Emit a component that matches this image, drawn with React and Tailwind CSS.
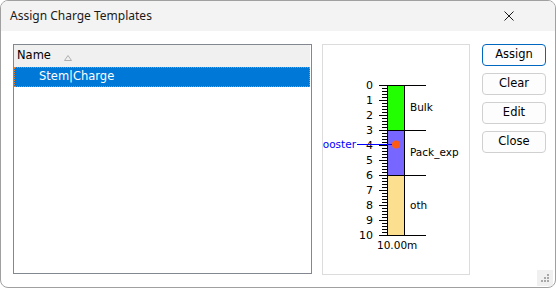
import React from "react";

function Chart() {
  const top = 40;
  const unit = 15;
  const ticks = [];
  for (let i = 0; i <= 50; i++) {
    const y = top + i * 3 + 0.5;
    const major = i % 5 === 0;
    ticks.push(
      <line key={i} x1={major ? 56 : 59} x2={64} y1={y} y2={y} stroke="#000" strokeWidth="1" />
    );
  }
  const labels = [];
  for (let i = 0; i <= 10; i++) {
    labels.push(
      <text key={i} x={50} y={top + i * unit + 4} textAnchor="end" fontSize="11" fill="#000">
        {i}
      </text>
    );
  }
  return (
    <svg width="146" height="229" viewBox="0 0 146 229" style={{ fontFamily: '"DejaVu Sans", sans-serif' }}>
      <rect x="64" y={top} width="18" height={3 * unit} fill="#22ff00" />
      <rect x="64" y={top + 3 * unit} width="18" height={3 * unit} fill="#7766ff" />
      <rect x="64" y={top + 6 * unit} width="18" height={4 * unit} fill="#fde08f" />
      <line x1="64.5" x2="64.5" y1={top} y2={top + 10 * unit} stroke="#000" />
      <line x1="81.5" x2="81.5" y1={top} y2={top + 10 * unit} stroke="#000" />
      {ticks}
      {[0, 3, 6, 10].map((u) => (
        <line key={u} x1="56" x2="103" y1={top + u * unit + 0.5} y2={top + u * unit + 0.5} stroke="#000" />
      ))}
      {labels}
      <text x="87" y="66" fontSize="10.5" fill="#000">Bulk</text>
      <text x="87" y="111" fontSize="10.5" fill="#000">Pack_exp</text>
      <text x="87" y="164" fontSize="10.5" fill="#000">oth</text>
      <text x="54" y="204" fontSize="10.5" fill="#000">10.00m</text>
      <line x1="34" x2="73" y1="99.5" y2="99.5" stroke="#0000ff" />
      <text x="33" y="103" textAnchor="end" fontSize="10.5" fill="#0000ff">booster</text>
      <circle cx="73" cy="99.5" r="4" fill="#ff5a14" />
    </svg>
  );
}

function Btn({ children, primary }) {
  return (
    <div
      className={
        "w-[64px] h-[22px] flex items-center justify-center rounded-[4px] border bg-[#fdfdfd] text-[11.5px] text-black " +
        (primary ? "border-[#0067c0]" : "border-[#d0d0d0]")
      }
      style={{ fontFamily: '"DejaVu Sans", sans-serif' }}
    >
      {children}
    </div>
  );
}

export default function App() {
  return (
    <div className="w-[556px] h-[289px] bg-white">
      <div className="w-[556px] h-[288px] border border-[#a0a0a0] rounded-[8px] overflow-hidden bg-white flex flex-col relative">
        <div
          className="h-[30px] bg-[#f3f3f3] flex items-center pl-[9px] text-[12px] text-[#1a1a1a] shrink-0"
          style={{ fontFamily: '"Noto Sans", sans-serif' }}
        >
          <span>Assign Charge Templates</span>
          <div className="ml-auto mr-[41px] w-[10px] h-[10px]">
            <svg width="10" height="10" viewBox="0 0 10 10">
              <path d="M0.5 0.5 L9.5 9.5 M9.5 0.5 L0.5 9.5" stroke="#1a1a1a" strokeWidth="1" />
            </svg>
          </div>
        </div>
        <div className="flex pl-[12px] pt-[13px]">
          <div className="w-[299px] h-[230px] border border-[#828790] pr-[1px] flex flex-col" style={{ fontFamily: '"DejaVu Sans", sans-serif' }}>
            <div className="h-[22px] bg-[#f0f0f0] flex items-center pl-[3px] text-[11.5px] text-black">
              <span>Name</span>
              <svg width="8" height="6" viewBox="0 0 8 6" className="ml-[13px] mt-[3px]">
                <path d="M0.5 5.5 L4 0.5 L7.5 5.5 Z" fill="none" stroke="#b0b0b0" />
              </svg>
            </div>
            <div className="h-[20px] bg-[#0078d7] border border-dotted border-[#f08020] flex items-center pl-[24px] text-[11.5px] text-white">
              Stem|Charge
            </div>
          </div>
          <div className="w-[148px] h-[231px] ml-[10px] border border-[#dcdcdc] overflow-hidden">
            <Chart />
          </div>
          <div className="ml-[12px] flex flex-col gap-[7px]">
            <Btn primary>Assign</Btn>
            <Btn>Clear</Btn>
            <Btn>Edit</Btn>
            <Btn>Close</Btn>
          </div>
        </div>
        <div className="absolute right-[2px] bottom-[1px] w-[16px] h-[16px] bg-[#f0f0f0]">
          <svg width="16" height="16" viewBox="0 0 16 16">
            <rect x="10" y="4" width="2" height="2" fill="#a8a8a8" />
            <rect x="7" y="7" width="2" height="2" fill="#a8a8a8" />
            <rect x="10" y="7" width="2" height="2" fill="#a8a8a8" />
            <rect x="4" y="10" width="2" height="2" fill="#a8a8a8" />
            <rect x="7" y="10" width="2" height="2" fill="#a8a8a8" />
            <rect x="10" y="10" width="2" height="2" fill="#a8a8a8" />
          </svg>
        </div>
      </div>
    </div>
  );
}
